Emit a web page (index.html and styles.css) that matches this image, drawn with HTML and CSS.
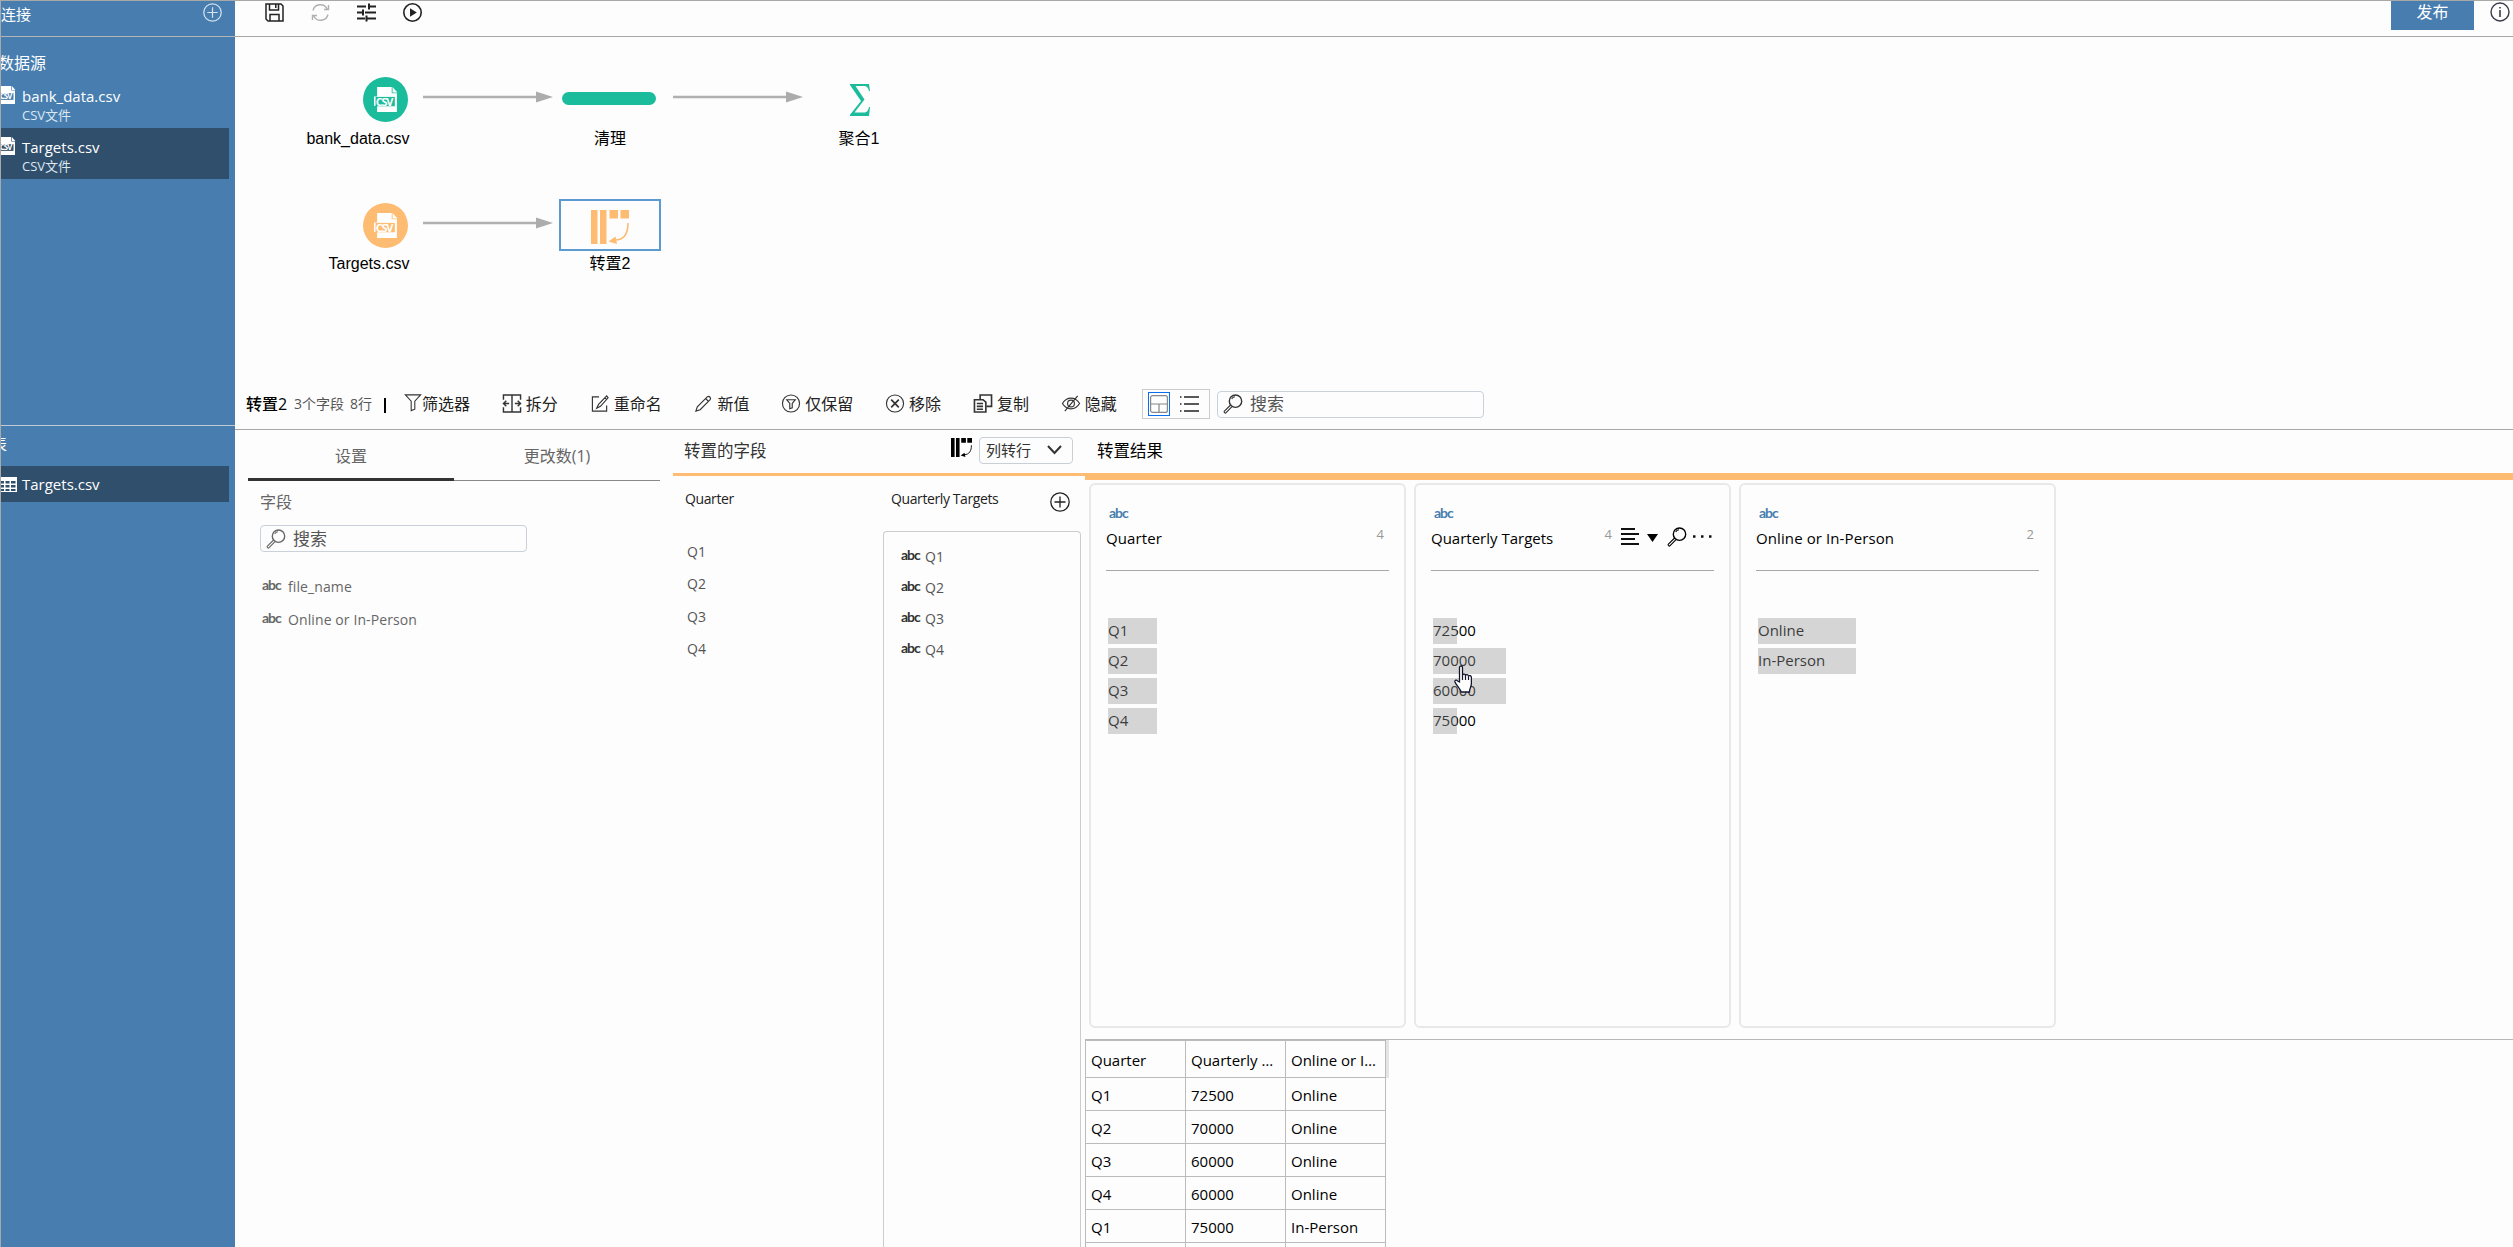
FILE: index.html
```html
<!DOCTYPE html>
<html lang="zh-CN">
<head>
    <meta charset="UTF-8">
    <meta name="viewport" content="width=device-width, initial-scale=1.0">
    <title>数据准备</title>
    <link rel="stylesheet" href="styles.css">
</head>
<body>
    <!-- shared icons -->
    <svg class="sprite" width="0" height="0">
        <symbol id="csv" viewBox="0 0 24 24">
            <path d="M5 0h12v6h5v18H3V18H0V9h3V0z" fill="currentColor"/>
            <path d="M17.800 0L22.500 5.200h-4.700z" fill="currentColor"/>
            <rect class="csv-band" x="1.500" y="9.500" width="18.500" height="9"/>
            <text x="1.600" y="17.800" font-size="10.500" textLength="17" fill="currentColor" font-weight="700">CSV</text>
        </symbol>
        <symbol id="search" viewBox="0 0 20 20">
            <circle cx="12.500" cy="7.200" r="6.200" fill="none" stroke="currentColor" stroke-width="1.400"/>
            <path d="M8.700 4.900c.7-1.400 2-2.100 3.300-2.200M7.600 11L1.400 17.200c-.9 1 .8 2.500 1.700 1.500L9 12.600" fill="none" stroke="currentColor" stroke-width="1.100"/>
        </symbol>
        <symbol id="plus" viewBox="0 0 20 20">
            <path d="M10 .8a9.200 9.200 0 1 0 0 18.400A9.200 9.200 0 1 0 10 .8M10 4.500v11M4.500 10h11" fill="none" stroke="currentColor" stroke-width="1.300"/>
        </symbol>
        <symbol id="pivot" viewBox="0 0 38 34">
            <path d="M0 0h6.500v34H0zM9 0h6.500v34H9zM18.500 0h8.500v8.500h-8.500zM29.500 0H38v8.500h-8.500z" fill="currentColor"/>
            <path d="M37 13c0 10-4 17-13 17" fill="none" stroke="currentColor" stroke-width="1.600"/>
            <path d="M17.500 31.500l7-5 1.500 7.500z" fill="currentColor"/>
        </symbol>
    </svg>

    <div class="app">
        <aside class="sidebar">
            <div class="side-head">
                <span>连接</span>
                <svg class="icon-19"><use href="#plus"/></svg>
            </div>
            <div class="side-sources">
                <div class="side-title">数据源</div>
                <div class="source">
                    <svg class="source-icon"><use href="#csv"/></svg>
                    <div><div class="source-name">bank_data.csv</div><div class="source-type">CSV文件</div></div>
                </div>
                <div class="source selected">
                    <svg class="source-icon"><use href="#csv"/></svg>
                    <div><div class="source-name">Targets.csv</div><div class="source-type">CSV文件</div></div>
                </div>
            </div>
            <div class="side-tables">
                <div class="side-title table-title">表</div>
                <div class="side-table selected">
                    <svg width="17" height="15" viewBox="0 0 17 15"><path d="M0 0h16v15H0" fill="#fff"/><path d="M0 4h3v2.500H0zM4.500 4h4v2.500h-4zM10 4h4.500v2.500H10zM0 8h3v2.500H0zM4.500 8h4v2.500h-4zM10 8h4.500v2.500H10zM0 12h3v2H0zM4.500 12h4v2h-4zM10 12h4.500v2H10z" fill="#304f6c"/></svg>
                    <span class="source-name">Targets.csv</span>
                </div>
            </div>
        </aside>

        <main class="main">
            <header class="topbar">
                <div class="top-icons">
                    <svg width="19" height="19" viewBox="0 0 19 19" fill="none" stroke="#222" stroke-width="1.500"><path d="M1 1h15l2 2v15H3l-2-2zM4.500 1v6h9V1M5 18v-6.500h9V18M10.800 1.500v3.500"/></svg>
                    <svg width="19" height="19" viewBox="0 0 19 19" fill="none" stroke="#b0b0b0" stroke-width="1.400"><path d="M2 7.500A7.600 7.600 0 0 1 16.200 6M17 11.500A7.600 7.600 0 0 1 2.800 13M17.500 2v4.500H13M1.500 17v-4.500H6"/></svg>
                    <svg width="19" height="19" viewBox="0 0 19 19" fill="none" stroke="#222" stroke-width="2"><path d="M0 3.500h9M12 3.500h7M12 .5v6M0 9.500h5M8 9.500h11M6 6.500v6M0 15.500h8M10 15.500h9M9.500 12.500v6"/></svg>
                    <svg width="19" height="19" viewBox="0 0 19 19"><circle cx="9.500" cy="9.500" r="8.700" fill="none" stroke="#222" stroke-width="1.600"/><path d="M7 5.200l6.800 4.300L7 13.800z" fill="#222"/></svg>
                </div>
                <div class="top-right">
                    <button class="publish">发布</button>
                    <svg width="20" height="20" viewBox="0 0 20 20" fill="none" stroke="#3c3c4c"><circle cx="10" cy="10" r="9" stroke-width="1.400"/><path d="M10 8v7M10 5v1.500" stroke-width="1.600"/></svg>
                </div>
            </header>

            <section class="canvas">
                <div class="node csv-node green n-bank"><svg><use href="#csv"/></svg></div>
                <div class="node-label l-bank">bank_data.csv</div>
                <svg class="arrow a1" viewBox="0 0 130 12"><path d="M0 6h114" stroke="#b0b0b0" stroke-width="2.600"/><path d="M113 .5L130 6l-17 5.500z" fill="#acacac"/></svg>
                <div class="node pill"></div>
                <div class="node-label l-clean">清理</div>
                <svg class="arrow a2" viewBox="0 0 130 12"><path d="M0 6h114" stroke="#b0b0b0" stroke-width="2.600"/><path d="M113 .5L130 6l-17 5.500z" fill="#acacac"/></svg>
                <svg class="node sigma" viewBox="0 0 20 32"><path d="M0 0h19l1 7h-1c-.8-3.500-2-5-5-5H5.500l9 13.500L4.500 28.500H14c3 0 4-1.500 5-5.500h1l-1 9H0v-1.200L11 17 0 1z" fill="#1abc9c"/></svg>
                <div class="node-label l-agg">聚合1</div>

                <div class="node csv-node orange n-targets"><svg><use href="#csv"/></svg></div>
                <div class="node-label l-targets">Targets.csv</div>
                <svg class="arrow a3" viewBox="0 0 130 12"><path d="M0 6h114" stroke="#b0b0b0" stroke-width="2.600"/><path d="M113 .5L130 6l-17 5.500z" fill="#acacac"/></svg>
                <div class="node pivot-node"><svg><use href="#pivot"/></svg></div>
                <div class="node-label l-pivot">转置2</div>
            </section>

            <div class="toolbar">
                <strong class="step-name">转置2</strong>
                <span class="step-info">3个字段</span>
                <span class="step-info">8行</span>
                <span class="divider"></span>
                <div class="tools">
                    <div class="tool tight"><svg viewBox="0 0 20 20"><path d="M1.500 1.500h17L12 8.500v9l-4 1.500V8.500z"/></svg>筛选器</div>
                    <div class="tool"><svg viewBox="0 0 20 20"><path d="M1 6V1h18v5M1 14v5h18v-5M10 1v18M1 10h6M13 10h6M4 7l-3 3 3 3M16 7l3 3-3 3" stroke-width="1.500"/></svg>拆分</div>
                    <div class="tool"><svg viewBox="0 0 20 20"><path d="M9 3H2v15h15v-6M17 2L8.500 11l-2 4 4-2L18.500 4zM15 4l2 2"/></svg>重命名</div>
                    <div class="tool"><svg viewBox="0 0 20 20"><path d="M14.500 3L4 13.500l-1.500 4.500L7 16.500 17.500 6c1.500-2-1.300-4.500-3-3zM13 5l3 3"/></svg>新值</div>
                    <div class="tool"><svg viewBox="0 0 20 20"><circle cx="10" cy="10" r="9"/><path d="M5.500 6h9L11.300 10v4.500l-2.600 1V10z"/></svg>仅保留</div>
                    <div class="tool"><svg viewBox="0 0 20 20"><circle cx="10" cy="10" r="9"/><path d="M6 6l8 8M14 6l-8 8" stroke-width="1.800"/></svg>移除</div>
                    <div class="tool"><svg viewBox="0 0 20 20"><path d="M7 5.500V1h12v12h-5M1 6h9l3 2.500V19H1zM3.500 10H10M3.500 13H10M3.500 16H10" stroke-width="1.700"/></svg>复制</div>
                    <div class="tool"><svg viewBox="0 0 20 20"><path d="M1 10c4.500-7.500 13.500-7.500 18 0-4.500 7.500-13.500 7.500-18 0zM17 2L3.500 18"/><circle cx="10" cy="10" r="3.600"/></svg>隐藏</div>
                </div>
                <div class="view-toggle">
                    <span class="view active"><svg width="18" height="18" viewBox="0 0 18 18" fill="none" stroke="#888" stroke-width="1.200"><rect x=".6" y=".6" width="16.800" height="16.800" rx="2"/><path d="M0 9h18M9 9v9"/></svg></span>
                    <span class="view"><svg width="19" height="18" viewBox="0 0 19 18" stroke="#222" stroke-width="1.600"><path d="M4 2h15M4 9h15M4 16h15M0 2h1.500M0 9h1.500M0 16h1.500"/></svg></span>
                </div>
                <div class="search top-search"><svg><use href="#search"/></svg>搜索</div>
            </div>

            <div class="workspace">
                <section class="settings">
                    <div class="tabs">
                        <div class="tab active">设置</div>
                        <div class="tab">更改数(1)</div>
                    </div>
                    <div class="settings-body">
                        <div class="field-title">字段</div>
                        <div class="search"><svg><use href="#search"/></svg>搜索</div>
                        <div class="field"><b class="abc">abc</b>file_name</div>
                        <div class="field"><b class="abc">abc</b>Online or In-Person</div>
                    </div>
                </section>

                <section class="pivot-fields">
                    <div class="pivot-head">
                        <span class="pivot-title">转置的字段</span>
                        <svg class="pivot-small"><use href="#pivot"/></svg>
                        <div class="select">列转行<svg width="15" height="10" viewBox="0 0 15 10"><path d="M1 1l6.500 7L14 1" fill="none" stroke="#333" stroke-width="2"/></svg></div>
                    </div>
                    <div class="pivot-cols">
                        <div class="names">
                            <div class="col-title">Quarter</div>
                            <ul>
                                <li>Q1</li>
                                <li>Q2</li>
                                <li>Q3</li>
                                <li>Q4</li>
                            </ul>
                        </div>
                        <div class="values">
                            <div class="col-title">Quarterly Targets<svg class="icon-20"><use href="#plus"/></svg></div>
                            <ul class="value-box">
                                <li><b class="abc">abc</b>Q1</li>
                                <li><b class="abc">abc</b>Q2</li>
                                <li><b class="abc">abc</b>Q3</li>
                                <li><b class="abc">abc</b>Q4</li>
                            </ul>
                        </div>
                    </div>
                </section>

                <section class="results">
                    <div class="results-title">转置结果</div>
                    <div class="cards">
                        <div class="card">
                            <b class="abc">abc</b>
                            <div class="card-head"><span class="card-name">Quarter</span><span class="count">4</span></div>
                            <div class="bars">
                                <div class="bar"><span>Q1</span><i style="width: 49px"></i></div>
                                <div class="bar"><span>Q2</span><i style="width: 49px"></i></div>
                                <div class="bar"><span>Q3</span><i style="width: 49px"></i></div>
                                <div class="bar"><span>Q4</span><i style="width: 49px"></i></div>
                            </div>
                        </div>
                        <div class="card">
                            <b class="abc">abc</b>
                            <div class="card-head with-tools">
                                <span class="card-name">Quarterly Targets</span>
                                <span class="count">4</span>
                                <svg class="card-tools" width="91" height="20" viewBox="0 0 91 20">
                                    <path d="M0 2h14M0 7h18M0 12h14M0 17h18" stroke="#111" stroke-width="2"/>
                                    <path d="M26 7h11l-5.500 8z" fill="#000"/>
                                    <use href="#search" x="46" y="0" width="20" height="20"/>
                                    <path d="M72 9.500h2.500M80 9.500h2.500M88 9.500h2.500" stroke="#111" stroke-width="2.500"/>
                                </svg>
                            </div>
                            <div class="bars">
                                <div class="bar"><span>72500</span><i style="width: 24px"></i></div>
                                <div class="bar"><span>70000</span><i style="width: 73px"></i></div>
                                <div class="bar"><span>60000</span><i style="width: 73px"></i></div>
                                <div class="bar"><span>75000</span><i style="width: 24px"></i></div>
                                <svg class="pointer" viewBox="0 0 18 28"><path d="M5.500 17V2.500c0-2 3-2 3 0V10c.4-1.400 2.800-1.200 3 .4.6-1.200 2.800-.8 3 .7.8-1 2.900-.6 2.900 1.500v6c0 3-1.900 4.500-1.900 8.400H7c0-2.500-5-7-6-10-.5-2 1.600-2.500 2.600-1z" fill="#fff" stroke="#15152e" stroke-width="1.300"/><path d="M8.500 10v5M11.500 11v4M14.500 12v3" stroke="#15152e" stroke-width="1.200"/></svg>
                            </div>
                        </div>
                        <div class="card">
                            <b class="abc">abc</b>
                            <div class="card-head"><span class="card-name">Online or In-Person</span><span class="count">2</span></div>
                            <div class="bars">
                                <div class="bar"><span>Online</span><i style="width: 98px"></i></div>
                                <div class="bar"><span>In-Person</span><i style="width: 98px"></i></div>
                            </div>
                        </div>
                    </div>
                    <div class="grid-wrap">
                        <table class="data-grid">
                            <tr><th>Quarter</th><th>Quarterly Targets</th><th>Online or In-Person</th></tr>
                            <tr><td>Q1</td><td>72500</td><td>Online</td></tr>
                            <tr><td>Q2</td><td>70000</td><td>Online</td></tr>
                            <tr><td>Q3</td><td>60000</td><td>Online</td></tr>
                            <tr><td>Q4</td><td>60000</td><td>Online</td></tr>
                            <tr><td>Q1</td><td>75000</td><td>In-Person</td></tr>
                            <tr><td></td><td></td><td></td></tr>
                        </table>
                        <div class="resize-handle"></div>
                    </div>
                </section>
            </div>
        </main>
    </div>
</body>
</html>
```

FILE: styles.css
```css
* {
    box-sizing: border-box;
}

body {
    margin: 0;
    height: 100vh;
    overflow: hidden;
    background-color: #fdfdfd;
    color: #000;
    font-family: "Open Sans", "Noto Sans CJK SC", sans-serif;
    font-size: 15px;
    line-height: 20px;
}

svg {
    display: block;
    flex: none;
}

ul {
    list-style: none;
    margin: 0;
    padding: 0;
}

.sprite {
    position: absolute;
}

.csv-band {
    fill: var(--band, #487eaf);
}

.app {
    display: flex;
    height: 100vh;
    border-top: 1px solid #a8a8a8;
    border-left: 1px solid #a8a8a8;
}

/* sidebar */
.sidebar {
    width: 234px;
    flex: none;
    background-color: #487eaf;
    color: #fff;
    overflow: hidden;
}

.side-head {
    height: 36px;
    display: flex;
    justify-content: space-between;
    padding: 2px 13px 0 0;
    border-bottom: 1px solid #b4b4b4;
}

.side-head span {
    line-height: 22px;
}

.icon-19 {
    width: 19px;
    height: 19px;
    color: #d5e2ee;
}

.icon-20 {
    width: 20px;
    height: 20px;
}

.side-sources {
    height: 389px;
    padding-top: 14px;
    border-bottom: 1px solid #c0cad4;
}

.side-title {
    font-size: 16px;
    line-height: 24px;
    margin-left: -3px;
}

.source {
    width: 228px;
    height: 51px;
    display: flex;
    padding: 9px 0 0 0;
}

.side-title + .source {
    margin-top: 2px;
}

.source-icon {
    width: 19px;
    height: 18px;
    margin: 0 5px 0 -3px;
}

.source-name {
    font-size: 15px;
    line-height: 20px;
}

.source-type {
    font-size: 13px;
    line-height: 18px;
    color: #dce8f2;
}

.selected {
    background-color: #304f6c;
    --band: #304f6c;
}

.table-title {
    margin: 6px 0 10px -10px;
    font-size: 16px;
}

.side-table {
    width: 228px;
    height: 36px;
    display: flex;
    align-items: center;
    gap: 4px;
}

/* main area */
.main {
    flex: 1;
    min-width: 0;
    display: flex;
    flex-direction: column;
}

.topbar {
    height: 36px;
    flex: none;
    display: flex;
    justify-content: space-between;
    padding-left: 30px;
    border-bottom: 1px solid #a8a8a8;
}

.top-icons {
    display: flex;
    gap: 27px;
    padding-top: 2px;
}

.top-right {
    display: flex;
    gap: 16px;
    padding-right: 3px;
}

.top-right svg {
    margin-top: 1px;
}

.publish {
    width: 83px;
    height: 29px;
    border: 0;
    padding: 0 0 10px;
    background-color: #487eaf;
    color: #fff;
    font: 16px/20px "Noto Sans CJK SC", sans-serif;
}

/* flow canvas */
.canvas {
    position: relative;
    height: 345px;
    flex: none;
}

.node,
.arrow,
.node-label {
    position: absolute;
}

.node-label {
    font-family: "Liberation Sans", "Noto Sans CJK SC", sans-serif;
    font-size: 16px;
    line-height: 20px;
    white-space: nowrap;
    transform: translateX(-50%);
}

.csv-node {
    width: 45px;
    height: 45px;
    border-radius: 50%;
    color: #fff;
    padding: 10px 0 0 11px;
}

.csv-node svg {
    width: 25px;
    height: 25px;
}

.green {
    background-color: #1abc9c;
    --band: #1abc9c;
}

.orange {
    background-color: #fdbc72;
    --band: #fdbc72;
}

.n-bank { left: 128px; top: 40px; }
.n-targets { left: 128px; top: 166px; }
.l-bank { left: 123px; top: 92px; }
.l-targets { left: 134px; top: 217px; }
.l-clean { left: 375px; top: 92px; }
.l-agg { left: 624px; top: 92px; }
.l-pivot { left: 375px; top: 217px; }

.arrow {
    width: 130px;
    height: 12px;
}

.a1 { left: 188px; top: 54px; }
.a2 { left: 438px; top: 54px; }
.a3 { left: 188px; top: 180px; }

.pill {
    left: 327px;
    top: 55px;
    width: 94px;
    height: 13px;
    border-radius: 7px;
    background-color: #1abc9c;
}

.sigma {
    left: 615px;
    top: 47px;
    width: 20px;
    height: 32px;
}

.pivot-node {
    left: 324px;
    top: 162px;
    width: 102px;
    height: 52px;
    border: 2px solid #5b9bd1;
    color: #fdbc72;
    padding: 9px 0 0 30px;
}

.pivot-node svg {
    width: 38px;
    height: 34px;
}

/* step toolbar */
.toolbar {
    height: 48px;
    flex: none;
    display: flex;
    align-items: center;
    padding: 0 0 3px 11px;
    border-bottom: 1px solid #a8a8a8;
    font-size: 16px;
    color: #222;
    white-space: nowrap;
}

.step-name {
    width: 48px;
    font-weight: 500;
    color: #000;
}

.step-info {
    font-size: 14px;
    color: #555;
    margin-right: 6px;
}

.divider {
    width: 2px;
    height: 15px;
    margin: 3px 18px 0 6px;
    background-color: #000;
}

.tools {
    display: flex;
    gap: 31.8px;
    padding-bottom: 1px;
}

.tool {
    display: flex;
    align-items: center;
    gap: 4px;
}

.tool.tight {
    gap: 0;
}

.tool svg {
    width: 20px;
    height: 19px;
    fill: none;
    stroke: #333;
    stroke-width: 1.2;
}

.tight svg {
    width: 18px;
    margin-top: -3px;
}

.view-toggle {
    width: 68px;
    height: 30px;
    margin: -1px 7px 0 auto;
    padding: 2px 5px;
    display: flex;
    gap: 5px;
    border: 1px solid #ccc;
}

.view {
    width: 22px;
    height: 24px;
    display: flex;
    align-items: center;
    justify-content: center;
    border: 1px solid transparent;
}

.view + .view {
    width: 29px;
}

.view.active {
    border-color: #0b6cf0;
}

.search {
    width: 267px;
    height: 27px;
    display: flex;
    align-items: center;
    gap: 7px;
    padding-left: 5px;
    border: 1px solid #c9d2da;
    border-radius: 4px;
    font-size: 17px;
    line-height: 24px;
    color: #555;
}

.search svg {
    width: 20px;
    height: 20px;
    color: #333;
}

.top-search {
    margin-right: 1029px;
}

/* workspace */
.workspace {
    flex: 1;
    min-height: 0;
    display: flex;
}

.settings {
    width: 438px;
    flex: none;
    padding: 12px 13px 0;
    color: #666;
}

.tabs {
    display: flex;
    height: 39px;
    border-bottom: 1px solid #888;
}

.tab {
    flex: 1;
    text-align: center;
    font-size: 16px;
    line-height: 28px;
    height: 39px;
}

.tab.active {
    border-bottom: 3px solid #333;
}

.settings-body {
    padding: 11px 12px 0;
}

.field-title {
    font-size: 16px;
    margin-bottom: 13px;
}

.settings-body .search svg {
    color: #666;
}

.field {
    display: flex;
    align-items: center;
    gap: 7px;
    height: 33px;
    padding-left: 2px;
    font-size: 14px;
    letter-spacing: 0.1px;
}

.settings-body .search + .field {
    margin-top: 18px;
}

.abc {
    width: 19px;
    margin-top: -3px;
    font-family: Lato, sans-serif;
    font-size: 14px;
    font-weight: 700;
    letter-spacing: -1px;
}

.pivot-fields {
    width: 412px;
    flex: none;
    display: flex;
    flex-direction: column;
}

.pivot-head {
    height: 46px;
    flex: none;
    display: flex;
    padding: 7px 12px 0 11px;
    border-bottom: 3px solid #fdbc72;
}

.pivot-title {
    flex: 1;
    font-size: 16.5px;
    line-height: 27px;
    color: #333;
}

.pivot-small {
    width: 21px;
    height: 19px;
    margin: 1px 7px 0 0;
}

.select {
    width: 94px;
    height: 27px;
    display: flex;
    align-items: center;
    justify-content: space-between;
    padding: 0 10px 2px 6px;
    border: 1px solid #c9cfd6;
    border-radius: 4px;
    font-size: 15px;
    color: #333;
}

.pivot-cols {
    flex: 1;
    display: flex;
    font-size: 14px;
    color: #222;
}

.names {
    width: 210px;
    padding-left: 12px;
}

.col-title {
    height: 55px;
    padding-top: 13px;
    display: flex;
    justify-content: space-between;
    letter-spacing: -0.4px;
}

.names ul {
    padding: 5px 0 0 2px;
}

.names li {
    height: 32.4px;
    line-height: 32px;
    color: #555;
}

.values {
    width: 198px;
    display: flex;
    flex-direction: column;
}

.values .col-title {
    flex: none;
    padding-left: 8px;
    padding-right: 11px;
}

.col-title svg {
    margin-top: 3px;
}

.value-box {
    flex: 1;
    padding: 9px 17px;
    border: 1px solid #ccc;
    border-bottom: 0;
    border-radius: 4px 4px 0 0;
}

.value-box li {
    height: 31px;
    display: flex;
    align-items: center;
    gap: 5px;
    color: #555;
}

.value-box .abc {
    color: #333;
}

/* results */
.results {
    flex: 1;
    min-width: 0;
}

.results-title {
    height: 50px;
    padding-left: 12px;
    font-size: 16.5px;
    line-height: 41px;
    border-bottom: 7px solid #fdbc72;
}

.cards {
    display: flex;
    gap: 8px;
    padding: 3px 4px 0;
}

.card {
    width: 317px;
    height: 545px;
    padding: 21px 15px 0;
    border: 2px solid #e8e8e8;
    border-radius: 6px;
}

.card > .abc {
    display: block;
    margin: -1px 0 0 3px;
    line-height: 16px;
    color: #487eaf;
}

.card-head {
    height: 50px;
    display: flex;
    padding-top: 6px;
    border-bottom: 1px solid #a8a8a8;
}

.card-name {
    flex: 1;
    line-height: 23px;
    letter-spacing: 0.1px;
}

.count {
    margin: -3px 5px 0 0;
    font-size: 13px;
    color: #999;
}

.card-head + .bars {
    margin: 47px 0 0 2px;
}

.with-tools .card-name {
    letter-spacing: 0;
}

.with-tools .count {
    margin-right: 12px;
}

.card-tools {
    margin: 0 2px 0 -3px;
}

.bars {
    position: relative;
}

.bar {
    position: relative;
    height: 26px;
    margin-bottom: 4px;
    line-height: 24px;
}

/* the bar is translucent and lies over its value */
.bar i {
    position: absolute;
    left: 0;
    top: 0;
    height: 26px;
    background-color: rgba(150, 150, 150, 0.39);
}

.pointer {
    position: absolute;
    left: 21px;
    top: 47px;
    width: 18px;
    height: 28px;
}

.grid-wrap {
    display: flex;
    margin-top: 11px;
    border-top: 1px solid #b8b8b8;
}

.data-grid {
    width: 301px;
    table-layout: fixed;
    border-collapse: collapse;
}

.data-grid th,
.data-grid td {
    height: 33px;
    padding: 1px 5px 0;
    border: 1px solid #bbb;
    text-align: left;
    font-weight: 400;
    white-space: nowrap;
    overflow: hidden;
    text-overflow: ellipsis;
}

.data-grid th {
    height: 37px;
}

.resize-handle {
    width: 3px;
    height: 38px;
    background-color: #e4e4e4;
}
```
